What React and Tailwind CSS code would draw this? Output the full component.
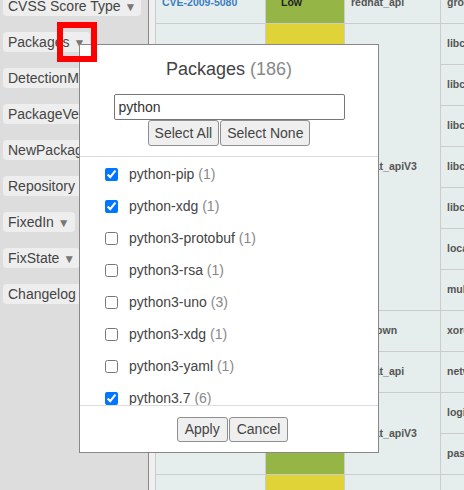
import React from "react";

const filters = [
  "CVSS Score Type",
  "Packages",
  "DetectionMethod",
  "PackageVersion",
  "NewPackageVersion",
  "Repository",
  "FixedIn",
  "FixState",
  "Changelog",
];

// grid cells of the vulnerability table: [row, col, span, text, kind]
const cells = [
  [1, 1, 1, "CVE-2009-5080", "link"],
  [1, 2, 1, "Low", "low"],
  [1, 3, 1, "redhat_api"],
  [1, 4, 1, "groff-base"],
  [2, 1, 7, "CVE-2010-4052", "link"],
  [2, 2, 7, "Moderate", "mod"],
  [2, 3, 7, "redhat_apiV3"],
  [2, 4, 1, "libcom_err"],
  [3, 4, 1, "libcroco"],
  [4, 4, 1, "libcurl"],
  [5, 4, 1, "libcap"],
  [6, 4, 1, "libcgroup"],
  [7, 4, 1, "locale"],
  [8, 4, 1, "multipath"],
  [9, 1, 2, "CVE-2011-1089", "link"],
  [9, 2, 2, "Moderate", "mod"],
  [9, 3, 1, "unknown"],
  [9, 4, 1, "xorg-x11"],
  [10, 3, 1, "redhat_api"],
  [10, 4, 1, "network"],
  [11, 1, 2, "CVE-2012-0864", "link"],
  [11, 2, 2, "Low", "low"],
  [11, 3, 2, "redhat_apiV3"],
  [11, 4, 1, "login"],
  [12, 4, 1, "passwd"],
  [13, 1, 1, "CVE-2013-0242", "link"],
  [13, 2, 1, "Moderate", "mod"],
  [13, 3, 1, "redhat_api"],
  [13, 4, 1, "glibc"],
];

const packages = [
  { name: "python-pip", count: 1, checked: true },
  { name: "python-xdg", count: 1, checked: true },
  { name: "python3-protobuf", count: 1, checked: false },
  { name: "python3-rsa", count: 1, checked: false },
  { name: "python3-uno", count: 3, checked: false },
  { name: "python3-xdg", count: 1, checked: false },
  { name: "python3-yaml", count: 1, checked: false },
  { name: "python3.7", count: 6, checked: true },
];

function Cell({ cell }) {
  const [row, col, span, text, kind] = cell;
  let tone = "bg-[#e6eded] text-[#555]";
  if (kind === "link") tone = "bg-[#e6eded] text-[#3c7fc1]";
  if (kind === "low") tone = "bg-[#95b547] text-[#222] pl-[15px]";
  if (kind === "mod") tone = "bg-[#e0d337] text-[#222] pl-[15px]";
  return (
    <div
      className={`flex items-center px-[6px] overflow-hidden whitespace-nowrap ${tone}`}
      style={{ gridRow: `${row} / span ${span}`, gridColumn: col }}
    >
      {text}
    </div>
  );
}

export default function App() {
  return (
    <div className="relative flex h-[490px] w-[464px] overflow-hidden font-['Liberation_Sans',Arial,sans-serif]">
      {/* Filters */}
      <div className="w-[149px] shrink-0 bg-[#dddddd] border-r border-[#888]">
        <div className="-mt-1 flex flex-col items-start gap-4 pl-[3px]">
          {filters.map((f) => (
            <div
              key={f}
              className="h-5 px-[5px] rounded bg-[#eeeeee] text-[14px] leading-5 text-[#444] whitespace-nowrap"
            >
              {f} <span className="text-[#777] text-[12px]">▼</span>
            </div>
          ))}
        </div>
      </div>

      {/* Table */}
      <div className="flex-1 bg-[#f0f0f0] pl-[6px] overflow-hidden">
        <div className="-mt-[17px] grid w-[460px] grid-cols-[109px_78px_95px_160px] auto-rows-[40px] gap-px bg-[#cccccc] pl-px text-[10.5px] font-bold">
          {cells.map((c, i) => (
            <Cell key={i} cell={c} />
          ))}
        </div>
      </div>

      {/* Packages popup */}
      <div className="absolute left-[79px] top-[44px] w-[300px] h-[409px] border border-[#888] bg-white text-[#444]">
        <div className="border-b border-[#dddddd] pb-[10px]">
          <div className="mt-[12px] h-6 text-center text-[18px] leading-6">
            Packages <span className="text-[#888]">(186)</span>
          </div>
          <input
            type="text"
            defaultValue="python"
            className="mx-auto mt-[13px] block h-[26px] w-[231px] rounded-[2px] border border-[#767676] px-1 text-[14px] text-[#333] outline-none"
          />
          <div className="flex h-[26px] justify-center gap-px">
            <button className="rounded-[3px] border border-[#8f8f8f] bg-[#efefef] px-[6px] text-[14px] text-[#444]">
              Select All
            </button>
            <button className="rounded-[3px] border border-[#8f8f8f] bg-[#efefef] px-[6px] text-[14px] text-[#444]">
              Select None
            </button>
          </div>
        </div>

        <div className="h-[248px] overflow-hidden pt-px">
          {packages.map((p) => (
            <label key={p.name} className="flex h-8 items-center gap-[11px] pl-[25px] text-[14px]">
              <input type="checkbox" defaultChecked={p.checked} className="m-0 h-[13px] w-[13px]" />
              <span>
                {p.name} <span className="text-[#888]">({p.count})</span>
              </span>
            </label>
          ))}
        </div>

        <div className="flex justify-center gap-px border-t border-[#dddddd] pl-[7px] pt-[11px]">
          <button className="h-[25px] rounded-[3px] border border-[#8f8f8f] bg-[#efefef] px-[7px] text-[14px] text-[#444]">
            Apply
          </button>
          <button className="h-[25px] rounded-[3px] border border-[#8f8f8f] bg-[#efefef] px-[7px] text-[14px] text-[#444]">
            Cancel
          </button>
        </div>
      </div>

      {/* highlight marker */}
      <div className="pointer-events-none absolute left-[57px] top-[22px] h-10 w-10 border-[6px] border-[#ff0000]" />
    </div>
  );
}
